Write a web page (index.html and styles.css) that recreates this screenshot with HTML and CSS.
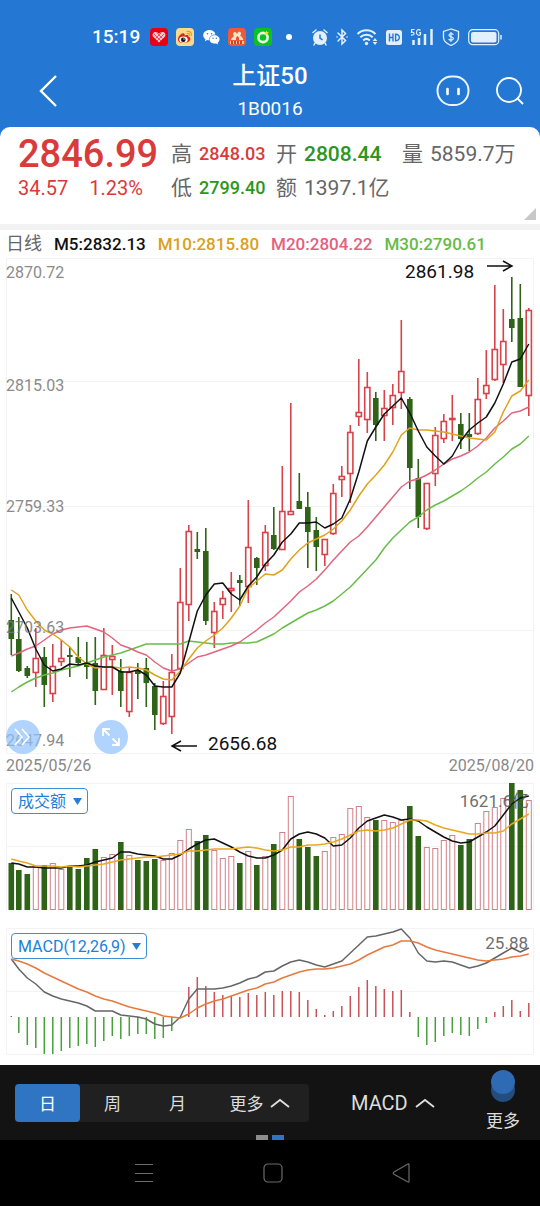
FILE: index.html
```html
<!DOCTYPE html>
<html lang="zh-CN">
<head>
    <meta charset="UTF-8">
    <meta name="viewport" content="width=device-width, initial-scale=1.0">
    <title>上证50 1B0016</title>
    <link rel="stylesheet" href="styles.css">
</head>
<body>
    <header class="header">
        <div class="status">
            <span class="status-time">15:19</span>
            <div class="status-group">
                <svg width="18" height="18" viewBox="0 0 18 18"><rect width="18" height="18" rx="4" fill="#e60012"/><path d="M9 14.5 3.2 8.800C1.500 6.500 3.500 3.500 6 4c1.500.2 2.500 1 3 2 .5-1 1.500-1.800 3-2 2.500-.5 4.500 2.500 2.800 4.800z" fill="#f8c9cc"/><path d="m4 6 7 7M6.500 4.500l6 6M14 6l-7 7M11.500 4.500l-6 6" stroke="#e60012" stroke-width=".6"/></svg>
                <svg width="18" height="18" viewBox="0 0 18 18"><rect width="18" height="18" rx="4" fill="#fbd88a"/><path d="M2 11.500C2 8 6 4.500 8 5.500c1 .5.500 1.500.5 2 2-1 4.500-.8 4 1.200 2 .5 2.300 2 1.500 3.500C12.500 15.500 2 16.500 2 11.500z" fill="#d9251d"/><ellipse cx="7.500" cy="11.600" rx="4.200" ry="3.200" fill="#fff"/><circle cx="7.300" cy="11.700" r="2.300" fill="#111"/><circle cx="8" cy="11" r=".7" fill="#fff"/><path d="M11 3.500c3-.8 5 1.500 4.300 4M11.300 5.500c1.500-.3 2.400.6 2 1.800" fill="none" stroke="#ef9a1a" stroke-width="1.200" stroke-linecap="round"/></svg>
                <svg width="18" height="18" viewBox="0 0 18 18"><path d="M7.500 2C4 2 1.200 4.300 1.200 7.200c0 1.600.9 3 2.300 4l-.6 2 2.300-1.200c.7.200 1.300.3 2 .3-.5-3.500 2.500-6 6.300-5.900C12.900 3.700 10.500 2 7.500 2z" fill="#fff"/><path d="M12.600 7.200c-2.800 0-5 1.900-5 4.200s2.200 4.200 5 4.200c.6 0 1.100-.1 1.600-.2l1.900 1-.5-1.700c1.200-.8 1.900-2 1.900-3.300 0-2.300-2.200-4.200-4.900-4.200z" fill="#fff"/><g fill="#2478d4"><circle cx="5.500" cy="5.700" r=".8"/><circle cx="9.500" cy="5.700" r=".8"/><circle cx="11" cy="10.300" r=".7"/><circle cx="14.300" cy="10.300" r=".7"/></g></svg>
                <svg width="18" height="18" viewBox="0 0 18 18"><rect width="18" height="18" rx="4" fill="#ee5a36"/><path d="M3 12c0-2 2-2.500 3-4-2-2 0-5 2-3.500L9 6l1.200-2c2.500-1 3.800 1.500 2 3.500 1.500 1.500 3 2.500 3 4.500z" fill="#fde4c8"/><path d="M8 12V9.500L9.500 8 11 9.500V12" fill="#ee4e2e"/><path d="M2 13h14v3H2z" fill="#fbc58e"/><path d="M4 13v3M7 13v3M10 13v3M13 13v3" stroke="#8d2318" stroke-width="1.400"/></svg>
                <svg width="18" height="18" viewBox="0 0 18 18"><rect width="18" height="18" rx="4" fill="#08c321"/><circle cx="9" cy="9.500" r="4.600" fill="none" stroke="#e8ffe8" stroke-width="2.600"/><path d="m12.500 2.500.7 1.600 1.800.3-1.300 1.200.3 1.700-1.500-.9-1.600.9.400-1.700L10 4.400l1.800-.3z" fill="#ffd51e"/></svg>
            </div>
            <span class="status-dot"></span>
            <div class="status-group">
                <svg width="16" height="18" viewBox="0 0 16 18"><circle cx="8" cy="10" r="7" fill="#e2effc"/><path d="M1 4.500 4 2M15 4.500 12 2M3 15l-1 2M13 15l1 2" stroke="#e2effc" stroke-width="1.500" stroke-linecap="round"/><path d="M8 6.500V10l2.500 1.800" fill="none" stroke="#2478d4" stroke-width="1.500"/></svg>
                <svg width="12" height="18" viewBox="0 0 12 18"><path d="m2 5 7.500 7.500L6 16V2l3.500 3.500L2 13M1 9h.1M11 9h.1" fill="none" stroke="#e2effc" stroke-width="1.500" stroke-linecap="round"/></svg>
                <svg width="22" height="18" viewBox="0 0 22 18"><path d="M1.500 6c5-5 13-5 18 0M4.300 9.300c3.500-3.500 9-3.500 12.400 0M7.200 12.500c2-2 4.600-2 6.600 0" fill="none" stroke="#e2effc" stroke-width="2"/><circle cx="10.500" cy="15.500" r="1.700" fill="#e2effc"/><path d="m19 10 2.300 3h-4.600zM19 17l2.300-3h-4.600z" fill="#e2effc"/></svg>
                <svg width="16" height="18" viewBox="0 0 16 18"><rect y="2" width="16" height="15" rx="2.500" fill="#e2effc"/><path d="M3.500 5.500v8M7 5.500v8M3.500 9.500H7M9.600 6.200v6.600c5 .3 5-6.900 0-6.600z" fill="none" stroke="#2478d4" stroke-width="1.400"/></svg>
                <svg width="24" height="18" viewBox="0 0 24 18"><path d="M3.500 12v5M9 10v7M15 6v11M21.500 1v16" stroke="#e2effc" stroke-width="2.500"/><path d="M4.500 1.500H1.700l-.3 2.800c3.600-.8 3.600 3.500-.4 2.800M10.500 2.500c-2-2-4-.5-4 2s2.500 3.500 4 2V4.700H9" fill="none" stroke="#e2effc" stroke-width="1.200"/></svg>
                <svg width="18" height="18" viewBox="0 0 18 18"><path d="M9 1 1.500 3.500v6C1.500 13 4.500 15.500 9 17.500c4.500-2 7.500-4.500 7.500-8v-6z" fill="none" stroke="#e2effc" stroke-width="1.300"/><path d="M11.300 6.800c-.6-1.600-4.300-1.500-4.300.5 0 2.100 4.400 1 4.400 3.200 0 2-4 2.100-4.700.4M9 4v10" fill="none" stroke="#e2effc" stroke-width="1.200"/></svg>
                <svg width="34" height="18" viewBox="0 0 34 18"><rect x=".7" y="1.700" width="30" height="15" rx="4" fill="none" stroke="#e2effc" stroke-width="1.200"/><rect x="3" y="4" width="25.500" height="10.500" rx="2" fill="#e2effc"/><path d="M33 7v4.500" stroke="#e2effc" stroke-width="1.500"/></svg>
            </div>
        </div>
        <div class="titlebar">
            <button class="icon-btn back" aria-label="返回">
                <svg width="20" height="34" viewBox="0 0 20 34"><path d="M18 2 3 17l15 15" fill="none" stroke="#fff" stroke-width="2.400"/></svg>
            </button>
            <div class="title">
                <h1>上证50</h1>
                <p>1B0016</p>
            </div>
            <div class="title-actions">
                <button class="icon-btn" aria-label="助手">
                    <svg width="34" height="32" viewBox="0 0 34 32"><rect x="1.500" y="1.500" width="31" height="28.500" rx="14.200" fill="none" stroke="#eaf6ff" stroke-width="2"/><path d="M11.500 14v5M22.500 14v5" stroke="#fff" stroke-width="2.600" stroke-linecap="round"/></svg>
                </button>
                <button class="icon-btn" aria-label="搜索">
                    <svg width="28" height="30" viewBox="0 0 28 30"><circle cx="13" cy="14" r="12" fill="none" stroke="#fff" stroke-width="1.800"/><path d="m21 22 6 6" stroke="#fff" stroke-width="1.800"/></svg>
                </button>
            </div>
        </div>
    </header>

    <main>
        <section class="quote">
            <div class="quote-main">
                <div class="price">2846.99</div>
                <div class="change"><span>34.57</span><span>1.23%</span></div>
            </div>
            <div class="quote-grid">
                <div class="cell"><span>高</span><b class="small up">2848.03</b></div>
                <div class="cell"><span>开</span><b class="down">2808.44</b></div>
                <div class="cell"><span>量</span><span>5859.7万</span></div>
                <div class="cell"><span>低</span><b class="small down">2799.40</b></div>
                <div class="cell"><span>额</span><span>1397.1亿</span></div>
            </div>
        </section>

        <div class="legend">
            <span class="legend-name">日线</span>
            <span class="m5">M5:2832.13</span>
            <span class="m10">M10:2815.80</span>
            <span class="m20">M20:2804.22</span>
            <span class="m30">M30:2790.61</span>
        </div>

        <section class="chart">
            <svg class="plot" viewBox="6 258 528 496">
                <path class="grid" d="M6.500 258.500h527v495h-527zM6 381.500h528M6 506.500h528M6 630.500h528"/>
                <g id="kline"></g>
                <g class="axis">
                    <text x="6" y="278">2870.72</text>
                    <text x="6" y="391">2815.03</text>
                    <text x="6" y="512">2759.33</text>
                    <text x="6" y="633">2703.63</text>
                    <text x="6" y="746">2647.94</text>
                </g>
                <g class="mark">
                    <text x="405" y="278">2861.98</text>
                    <path d="M487 266h24M503 261l9 5-9 5"/>
                    <text x="208" y="750">2656.68</text>
                    <path d="M197 746h-24M181 741l-9 5 9 5"/>
                </g>
            </svg>
            <div class="tools">
                <button class="tool" aria-label="展开">
                    <svg width="20" height="20" viewBox="0 0 20 20"><path d="m2 2 7 8-7 8M9 2l7 8-7 8" fill="none" stroke="#fff" stroke-width="1.600"/></svg>
                </button>
                <button class="tool" aria-label="全屏">
                    <svg width="20" height="20" viewBox="0 0 20 20"><path d="M2 9V2h7M2 2l6.500 6.500M18 11v7h-7M18 18l-6.500-6.500" fill="none" stroke="#fff" stroke-width="1.800"/></svg>
                </button>
            </div>
        </section>
        <div class="dates"><span>2025/05/26</span><span>2025/08/20</span></div>

        <section class="chart volume">
            <svg class="plot" viewBox="6 783 528 127">
                <path class="grid" d="M6.500 910V783.500h527V910M6 846.500h528"/>
                <g id="volume"></g>
                <text class="value" x="529" y="807">1621.6亿</text>
            </svg>
            <label class="picker">
                <select aria-label="成交额"><option>成交额</option></select>
                <svg width="9" height="7" viewBox="0 0 9 7"><path d="M0 0h9L4.500 7z" fill="#2080d8"/></svg>
            </label>
        </section>

        <section class="chart macd">
            <svg class="plot" viewBox="6 928 528 127">
                <path class="grid" d="M6.500 928.500h527v126h-527zM6 991.500h528"/>
                <g id="macd"></g>
                <text class="value" x="528" y="949">25.88</text>
            </svg>
            <label class="picker">
                <select aria-label="指标"><option>MACD(12,26,9)</option></select>
                <svg width="9" height="7" viewBox="0 0 9 7"><path d="M0 0h9L4.500 7z" fill="#2080d8"/></svg>
            </label>
        </section>
    </main>

    <div class="toolbar">
        <div class="segment">
            <button class="seg active">日</button>
            <button class="seg">周</button>
            <button class="seg">月</button>
            <button class="seg wide">更多
                <svg width="20" height="12" viewBox="0 0 20 12"><path d="m1 10 9-7 9 7" fill="none" stroke="#ddd" stroke-width="1.800"/></svg>
            </button>
        </div>
        <button class="indicator">MACD
            <svg width="20" height="12" viewBox="0 0 20 12"><path d="m1 10 9-7 9 7" fill="none" stroke="#ddd" stroke-width="1.800"/></svg>
        </button>
        <button class="more">
            <svg width="24" height="34" viewBox="0 0 24 34"><circle cx="12" cy="20" r="12" fill="#234d7d"/><circle cx="12" cy="12" r="12" fill="#2f6ab5"/></svg>
            更多
        </button>
        <div class="pages"><i></i><i class="on"></i></div>
    </div>
    <nav class="sysnav">
        <button class="icon-btn" aria-label="最近任务">
            <svg width="20" height="20" viewBox="0 0 20 20"><path d="M1 1.500h18M1 10.500h18M1 18.500h18" stroke="#6a6a6a" stroke-width="1.200"/></svg>
        </button>
        <button class="icon-btn" aria-label="主页">
            <svg width="20" height="20" viewBox="0 0 20 20"><rect x="1" y="1" width="18" height="18" rx="4" fill="none" stroke="#6a6a6a" stroke-width="1.200"/></svg>
        </button>
        <button class="icon-btn" aria-label="后退">
            <svg width="20" height="20" viewBox="0 0 20 20"><path d="M17 1.500v17q0 1-1.500.3L2 11.200q-1.500-1.200 0-2.200L15.500 1.200q1.500-.7 1.500.3z" fill="none" stroke="#6a6a6a" stroke-width="1.200"/></svg>
        </button>
    </nav>
    <script src="charts.js"></script>
</body>
</html>
```
FILE: styles.css
```css
* {
    box-sizing: border-box;
}

body {
    margin: 0;
    background: #fff;
    color: #666;
    font-family: Roboto, "Noto Sans CJK SC", sans-serif;
}

svg {
    display: block;
    flex: none;
}

button {
    border: none;
    background: none;
    padding: 0;
    font-family: inherit;
    color: inherit;
    cursor: pointer;
}

/* Header */
.header {
    background: #2478d4;
    color: #fff;
    height: 137px;
}

.status {
    display: flex;
    align-items: center;
    height: 62px;
    padding: 11px 0 0 92px;
}

.status-time {
    width: 58px;
    font-size: 19px;
    font-weight: 500;
}

.status-group {
    display: flex;
    gap: 8px;
}

.status-dot {
    width: 6px;
    height: 6px;
    margin: 0 20px 0 14px;
    border-radius: 50%;
    background: #fff;
}

.titlebar {
    display: grid;
    grid-template-columns: 1fr auto 1fr;
    align-items: center;
    padding: 0 16px;
}

.back {
    justify-self: start;
    padding-left: 22px;
}

.title {
    text-align: center;
}

.title h1 {
    margin: 0;
    font-size: 24px;
    line-height: 28px;
    font-weight: 500;
}

.title p {
    margin: 8px 0 0;
    font-size: 19px;
    line-height: 22px;
}

.title-actions {
    display: flex;
    align-items: center;
    justify-content: flex-end;
    gap: 26px;
}

/* Quote */
.quote {
    position: relative;
    display: flex;
    margin-top: -10px;
    height: 103px;
    padding: 10px 18px 0;
    background: #fff;
    border-radius: 10px 10px 0 0;
    border-bottom: 6px solid #f2f2f3;
}

.quote::after {
    content: "";
    position: absolute;
    right: 4px;
    bottom: 4px;
    border: 6px solid;
    border-color: transparent #c8c8c8 #c8c8c8 transparent;
}

.quote-main {
    width: 153px;
    color: #d93a3a;
}

.price {
    font-size: 38px;
    line-height: 34px;
    font-weight: 500;
}

.change {
    display: flex;
    gap: 21px;
    font-size: 20px;
    line-height: 34px;
}

.quote-grid {
    display: grid;
    grid-template-columns: 105px 126px auto;
    grid-auto-rows: 34px;
}

.cell {
    display: flex;
    align-items: center;
    gap: 7px;
    font-size: 21px;
    line-height: 34px;
    white-space: nowrap;
}

.cell b {
    font-weight: 500;
}

.cell .small {
    font-size: 18px;
}

.up {
    color: #d93a3a;
}

.down {
    color: #2c9620;
}

.legend {
    display: flex;
    gap: 12px;
    padding-left: 6px;
    font-size: 17px;
    line-height: 28px;
    font-weight: 500;
    white-space: nowrap;
}

.legend-name {
    font-size: 18px;
    font-weight: 400;
}

.m5 {
    color: #111;
}

.m10 {
    color: #dca01a;
}

.m20 {
    color: #e4607c;
}

.m30 {
    color: #66bb48;
}

/* Charts */
.chart {
    position: relative;
    margin: 0 6px;
}

.plot {
    width: 100%;
    height: auto;
    overflow: visible;
}

.grid {
    fill: none;
    stroke: #f3f3f3;
}

.axis text {
    font-size: 16px;
    fill: #777;
    opacity: 0.85;
}

.mark text {
    font-size: 19px;
    fill: #111;
}

.mark path {
    fill: none;
    stroke: #111;
    stroke-width: 1.5;
}

.value {
    font-size: 17px;
    fill: #555;
    opacity: 0.85;
    text-anchor: end;
}

.line {
    fill: none;
    stroke-width: 1.5;
    stroke-linejoin: round;
}

.tools {
    position: absolute;
    left: 0;
    bottom: 0;
    display: flex;
    gap: 54px;
}

.tool {
    display: flex;
    align-items: center;
    justify-content: center;
    width: 34px;
    height: 34px;
    border-radius: 50%;
    background: rgba(142, 194, 252, 0.7);
}

.dates {
    display: flex;
    justify-content: space-between;
    padding: 0 6px;
    font-size: 16px;
    line-height: 24px;
    color: #888;
}

.volume {
    margin-top: 5px;
}

.macd {
    margin-top: 18px;
    margin-bottom: 10px;
}

.picker {
    position: absolute;
    left: 5px;
    top: 5px;
    display: flex;
    align-items: center;
}

.picker select {
    appearance: none;
    height: 26px;
    margin: 0;
    padding: 0 20px 0 6px;
    border: 1px solid #3a8fd6;
    border-radius: 4px;
    background: #fff;
    color: #2080d8;
    font-family: inherit;
    font-size: 16px;
}

.picker svg {
    position: absolute;
    right: 6px;
}

/* Bottom bars */
.toolbar {
    position: relative;
    display: flex;
    align-items: center;
    height: 75px;
    padding: 0 20px 0 15px;
    background: #131313;
    color: #ddd;
}

.segment {
    display: flex;
    border-radius: 4px;
    background: #202020;
}

.seg {
    display: flex;
    align-items: center;
    justify-content: center;
    gap: 6px;
    width: 65px;
    height: 38px;
    font-size: 17px;
}

.seg.active {
    border-radius: 4px;
    background: #3074c4;
    color: #fff;
}

.seg.wide {
    width: 99px;
}

.indicator {
    display: flex;
    align-items: center;
    gap: 7px;
    margin-left: 42px;
    font-size: 20px;
}

.more {
    display: flex;
    flex-direction: column;
    align-items: center;
    gap: 3px;
    margin-left: auto;
    font-size: 17px;
    line-height: 28px;
}

.pages {
    position: absolute;
    left: 0;
    right: 0;
    bottom: 0;
    display: flex;
    justify-content: center;
    gap: 4px;
}

.pages i {
    width: 12px;
    height: 5px;
    background: #8c8c8c;
}

.pages .on {
    background: #3074c4;
}

.sysnav {
    display: flex;
    align-items: center;
    justify-content: center;
    gap: 109px;
    height: 66px;
    padding-left: 6px;
    background: #000;
}
```
FILE: charts.js
```js
const X0 = 10.3;
const STEP = 8.5;
const GREEN = '#2f6318';
const RED = '#d8434a';

// high, body top, body bottom, low, rising
const candles = [
    [594,620,639,655,0],[617,639,671,672,0],[666,668,676,678,0],[628,658,673,687,1],
    [647,657,685,707,0],[644,666,694,702,1],[640,658,662,666,1],[647,655,657,677,0],
    [637,657,663,665,0],[642,662,667,679,0],[637,663,691,705,0],[628,655,690,690,1],
    [645,656,660,695,1],[659,671,691,707,0],[668,672,712,717,1],[663,670,674,699,0],
    [658,668,683,707,0],[683,686,715,730,0],[681,696,724,725,1],[654,672,717,734,1],
    [568,602,669,670,1],[525,531,605,621,1],[532,549,552,559,0],[528,551,621,625,0],
    [602,611,633,648,1],[591,598,605,619,1],[572,588,591,612,1],[575,580,583,606,0],
    [500,547,587,603,1],[557,558,568,585,0],[525,532,566,571,1],[507,535,549,550,0],
    [466,511,550,550,1],[403,511,515,515,1],[473,501,509,509,0],[492,507,532,568,0],
    [517,530,547,571,0],[539,539,555,566,1],[484,493,534,535,1],[466,476,480,497,1],
    [425,432,474,503,1],[359,412,417,426,1],[372,387,420,433,1],[392,398,425,441,0],
    [390,408,416,441,1],[384,395,408,425,1],[320,371,393,409,1],[397,399,468,489,0],
    [459,478,517,528,0],[483,483,529,530,1],[427,435,474,486,1],[414,421,439,443,1],
    [395,418,420,441,1],[413,424,439,449,0],[413,434,437,451,0],[378,399,434,435,1],
    [350,385,394,399,1],[285,349,380,381,1],[309,341,365,383,1],[277,319,328,342,0],
    [284,318,387,387,0],[308,310,396,416,1]
];

const m5 = [598,612,628,649,665,671,669,664,665,663,666,667,667,672,672,670,675,686,687,687,673,642,611,595,584,583,594,600,586,577,564,555,542,534,523,523,522,528,524,518,499,472,441,427,414,406,398,413,431,447,456,464,456,441,430,423,417,403,384,362,359,344];
const m10 = [590,595,610,621,630,634,640,647,657,664,668,667,667,668,667,668,670,675,679,680,671,659,648,641,635,628,618,606,588,581,574,575,570,559,550,543,539,535,529,521,510,496,484,475,465,452,435,428,430,430,431,432,434,436,438,439,440,432,412,396,391,380];
const m20 = [656,653,649,646,640,634,630,628,627,626,629,632,638,645,648,652,655,662,668,671,669,663,657,655,652,649,646,642,636,630,623,617,609,601,592,586,579,570,560,551,542,536,527,517,507,497,487,481,479,475,470,464,459,456,452,446,438,428,421,413,411,407];
const m30 = [692,687,682,678,675,673,670,668,666,663,660,657,655,653,650,647,644,644,644,644,644,641,642,643,644,644,643,643,643,642,638,634,628,623,618,613,610,606,601,594,587,578,569,560,548,538,530,522,517,510,505,501,496,491,485,478,472,464,457,449,444,436];

const vol = [863,870,874,867,865,863,869,867,869,858,849,857,854,842,855,860,861,859,860,853,840,829,841,835,850,858,856,863,851,865,856,844,832,796,839,847,856,851,837,834,808,806,817,820,820,822,820,806,836,847,848,840,835,845,839,823,811,807,798,783,790,800];
const vol5 = [863,864,867,867,868,868,868,866,866,865,862,860,858,852,852,854,855,856,859,859,855,849,844,840,839,843,847,852,856,858,858,855,850,839,834,832,834,838,846,845,838,828,821,818,815,817,820,819,821,827,832,837,841,843,842,837,832,826,815,804,798,796];
const vol10 = [859,861,863,866,866,866,867,866,867,866,865,864,862,860,859,858,857,857,856,855,854,851,851,850,849,849,849,848,847,848,850,851,850,847,847,845,845,844,842,839,835,831,830,831,830,828,824,820,820,821,825,828,830,832,834,834,833,833,831,824,819,814];

const hist = [1016,1033,1045,1048,1054,1054,1051,1048,1046,1044,1047,1041,1036,1039,1036,1034,1034,1039,1038,1031,1017,987,977,986,992,995,996,997,993,995,992,995,991,991,992,1000,1009,1015,1011,1006,996,987,980,986,989,991,990,1012,1037,1045,1042,1036,1033,1035,1036,1029,1023,1012,1006,1000,1011,1003];
const dif = [959,969,978,984,992,996,999,1001,1003,1006,1011,1011,1011,1015,1016,1017,1019,1024,1026,1025,1017,999,989,989,989,988,986,983,979,977,972,971,966,962,960,962,965,967,964,961,953,945,937,936,934,932,929,938,953,961,962,961,962,965,968,966,963,958,953,948,952,948];
const dea = [959,961,964,968,973,977,981,985,989,992,996,999,1001,1004,1007,1009,1011,1013,1016,1017,1018,1014,1008,1004,1001,999,996,993,990,988,984,982,978,975,972,970,969,969,968,966,964,960,955,951,947,945,941,941,943,947,950,952,954,956,958,960,961,960,959,957,956,954];

const xAt = i => X0 + STEP * i + (i === 0 ? 1 : 0);

function line(values, color) {
    const points = values.map((y, i) => `${xAt(i)},${y}`).join(' ');
    return `<polyline class="line" points="${points}" stroke="${color}"/>`;
}

function drawKline() {
    let out = '';
    candles.forEach(([high, top, bottom, low, up], i) => {
        const x = xAt(i);
        const color = up ? RED : GREEN;
        out += `<path d="M${x} ${high}V${top}M${x} ${bottom}V${low}" stroke="${color}" stroke-width="1.6"/>`;
        if (up) {
            out += `<rect x="${x - 2.6}" y="${top + 0.5}" width="5.2" height="${Math.max(bottom - top - 1, 1)}" fill="#fff" stroke="${color}" stroke-width="1.6"/>`;
        } else {
            out += `<rect x="${x - 2.8}" y="${top}" width="5.6" height="${bottom - top}" fill="${color}"/>`;
        }
    });
    out += line(m30, '#68bd48') + line(m20, '#e0667f') + line(m10, '#dfa21c') + line(m5, '#111');
    document.getElementById('kline').innerHTML = out;
}

function drawVolume() {
    let out = '';
    vol.forEach((y, i) => {
        const x = xAt(i);
        if (candles[i][4]) {
            out += `<rect x="${x - 2.5}" y="${y + 0.5}" width="5" height="${909 - y}" fill="#fff" stroke="#d08086"/>`;
        } else {
            out += `<rect x="${x - 2.8}" y="${y}" width="5.6" height="${910 - y}" fill="${GREEN}"/>`;
        }
    });
    out += line(vol5, '#111') + line(vol10, '#e8a820');
    document.getElementById('volume').innerHTML = out;
}

function drawMacd() {
    let out = '';
    hist.forEach((y, i) => {
        const color = y > 1017 ? '#46a03c' : '#cc5058';
        out += `<path d="M${xAt(i)} 1017V${y}" stroke="${color}" stroke-width="1.5"/>`;
    });
    out += line(dif, '#666') + line(dea, '#e67a3e');
    document.getElementById('macd').innerHTML = out;
}

drawKline();
drawVolume();
drawMacd();
```
